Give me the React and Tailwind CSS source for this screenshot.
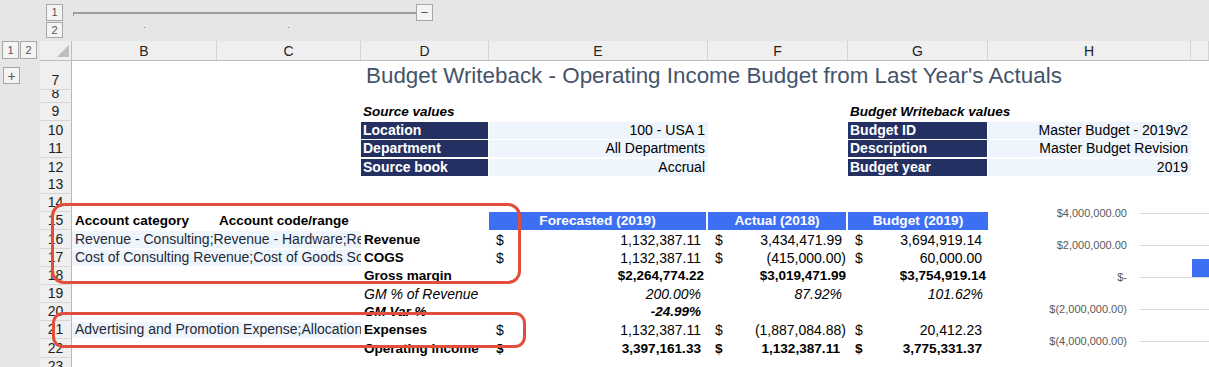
import React from "react";

const COLS =
  "grid grid-cols-[40px_32px_145px_144px_128px_219px_140px_140px_203px_18px]";

function Btn({ children, className = "" }) {
  return (
    <div
      className={`flex items-center justify-center border border-[#a6a6a6] bg-[#f4f4f4] text-[11px] leading-none text-[#555] ${className}`}
    >
      {children}
    </div>
  );
}

function Acct({ v, pr = "pr-[7px]", bold = false }) {
  return (
    <div
      className={`flex h-full items-end justify-between whitespace-nowrap pb-[1px] pl-[7px] ${pr} ${
        bold ? "font-bold text-[13.6px]" : ""
      }`}
    >
      <span>$</span>
      <span>{v}</span>
    </div>
  );
}

function Num({ v, pr = "pr-[7px]", cls = "" }) {
  return (
    <div
      className={`flex h-full items-end justify-end whitespace-nowrap pb-[1px] ${pr} ${cls}`}
    >
      {v}
    </div>
  );
}

function Txt({ children, cls = "", pl = "pl-[3px]" }) {
  return (
    <div
      className={`flex h-full items-end whitespace-nowrap pb-[1px] ${pl} ${cls}`}
    >
      {children}
    </div>
  );
}

function Navy({ children }) {
  return (
    <div className="flex h-full items-end whitespace-nowrap border-y border-r border-white bg-[#243062] pb-[1px] pl-[2px] font-bold text-white">
      {children}
    </div>
  );
}

function Light({ children }) {
  return (
    <div className="flex h-full items-end justify-end whitespace-nowrap border-y border-white bg-[#eef5fd] pb-[1px] pr-[3px]">
      {children}
    </div>
  );
}

function Head({ children, last = false }) {
  return (
    <div
      className={`flex h-full items-end justify-center whitespace-nowrap bg-[#3d6ff5] pb-[1px] text-[13.7px] font-bold text-white ${
        last ? "" : "border-r-2 border-white"
      }`}
    >
      {children}
    </div>
  );
}

function Fill({ children }) {
  return (
    <div className="col-span-2 flex h-full items-end overflow-hidden whitespace-nowrap border-y border-white bg-[#eef5fd] pb-[1px] pl-[3px] text-[#1f2937]">
      {children}
    </div>
  );
}

function Row({ n, h, cells, outline }) {
  return (
    <div className={`${COLS} ${h}`}>
      <div className="relative bg-[#e6e6e6]">{outline}</div>
      <div className="flex items-end justify-center overflow-hidden border-b border-r border-b-[#d6d6d6] border-r-[#b8b8b8] bg-[#efefef] pb-[1px] text-[14px] leading-[16px] text-[#222]">
        {n}
      </div>
      {cells}
    </div>
  );
}

const E = () => <div />;

export default function App() {
  const std = "h-[18.2px]";
  const B = "font-bold text-[13.5px]";
  return (
    <div className="relative h-[367px] w-[1209px] overflow-hidden bg-white font-['Liberation_Sans',Arial,sans-serif] text-[14px] leading-[16px] text-black">
      {/* outline bar */}
      <div className="relative flex h-[41px] items-start bg-[#e6e6e6] pl-[46px] pt-[4px]">
        <div className="flex flex-col gap-[1px]">
          <Btn className="h-[17px] w-[17px]">1</Btn>
          <Btn className="h-[16px] w-[17px]">2</Btn>
        </div>
        <div className="ml-[10px] flex h-[17px] items-center">
          <div className="relative h-[2px] w-[343px] bg-[#9c9c9c]">
            <div className="absolute left-0 top-0 h-[4px] w-[1px] bg-[#9c9c9c]" />
          </div>
          <Btn className="h-[17px] w-[17px] text-[13px]">−</Btn>
        </div>
        <div className="absolute left-[144px] top-[27px] h-[1px] w-[1px] bg-[#888]" />
        <div className="absolute left-[288px] top-[27px] h-[1px] w-[1px] bg-[#888]" />
      </div>

      {/* column header */}
      <div className={`${COLS} h-[20px]`}>
        <div className="flex items-start gap-[1px] bg-[#e6e6e6] pl-[2px]">
          <Btn className="h-[18px] w-[17px]">1</Btn>
          <Btn className="h-[18px] w-[17px]">2</Btn>
        </div>
        <div className="relative border-b border-r border-[#bdbdbd] bg-[#efefef]">
          <svg
            className="absolute right-[2px] bottom-[3px]"
            width="12"
            height="12"
            viewBox="0 0 12 12"
          >
            <polygon points="12,0 12,12 0,12" fill="#bdbdbd" />
          </svg>
        </div>
        {["B", "C", "D", "E", "F", "G", "H", ""].map((c, i) => (
          <div
            key={i}
            className="flex items-center justify-center border-b border-r border-b-[#bdbdbd] border-r-[#d4d4d4] bg-[#efefef] font-['Liberation_Sans_Narrow','Liberation_Sans',sans-serif] text-[14px] text-[#222]"
          >
            {c}
          </div>
        ))}
      </div>

      {/* row 7 */}
      <Row
        n="7"
        h="h-[29px]"
        outline={<Btn className="absolute left-[3px] top-[6px] h-[17px] w-[17px] text-[14px]">+</Btn>}
        cells={
          <>
            <E />
            <E />
            <div className="flex items-end whitespace-nowrap pb-[2px] pl-[5px] text-[22.4px] leading-[25px] text-[#44546a]">
              Budget Writeback - Operating Income Budget from Last Year's Actuals
            </div>
            <E />
            <E />
            <E />
            <E />
            <E />
          </>
        }
      />
      <Row n="8" h="h-[13px]" cells={<></>} />
      <Row
        n="9"
        h={std}
        cells={
          <>
            <E />
            <E />
            <Txt pl="pl-[2px]" cls={`${B} italic`}>Source values</Txt>
            <E />
            <E />
            <Txt pl="pl-[2px]" cls={`${B} italic`}>Budget Writeback values</Txt>
            <E />
            <E />
          </>
        }
      />
      {[
        ["10", "Location", "100 - USA 1", "Budget ID", "Master Budget - 2019v2"],
        ["11", "Department", "All Departments", "Description", "Master Budget Revision"],
        ["12", "Source book", "Accrual", "Budget year", "2019"],
      ].map((r) => (
        <Row
          key={r[0]}
          n={r[0]}
          h={std}
          cells={
            <>
              <E />
              <E />
              <Navy>{r[1]}</Navy>
              <Light>{r[2]}</Light>
              <E />
              <Navy>{r[3]}</Navy>
              <Light>{r[4]}</Light>
              <E />
            </>
          }
        />
      ))}
      <Row n="13" h={std} cells={<></>} />
      <Row n="14" h={std} cells={<></>} />
      <Row
        n="15"
        h={std}
        cells={
          <>
            <Txt cls={B}>Account category</Txt>
            <Txt pl="pl-[2px]" cls={B}>Account code/range</Txt>
            <E />
            <Head>Forecasted (2019)</Head>
            <Head>Actual (2018)</Head>
            <Head last>Budget (2019)</Head>
            <E />
            <E />
          </>
        }
      />
      <Row
        n="16"
        h={std}
        cells={
          <>
            <Fill>Revenue - Consulting;Revenue - Hardware;Rev</Fill>
            <Txt cls={B}>Revenue</Txt>
            <Acct v="1,132,387.11" />
            <Acct v="3,434,471.99" pr="pr-[6px]" />
            <Acct v="3,694,919.14" pr="pr-[6px]" />
            <E />
            <E />
          </>
        }
      />
      <Row
        n="17"
        h={std}
        cells={
          <>
            <Fill>Cost of Consulting Revenue;Cost of Goods Sol</Fill>
            <Txt cls={B}>COGS</Txt>
            <Acct v="1,132,387.11" />
            <Acct v="(415,000.00)" pr="pr-[2px]" />
            <Acct v="60,000.00" pr="pr-[6px]" />
            <E />
            <E />
          </>
        }
      />
      <Row
        n="18"
        h={std}
        cells={
          <>
            <E />
            <E />
            <Txt cls={B}>Gross margin</Txt>
            <Num v="$2,264,774.22" pr="pr-[4px]" cls={B} />
            <Num v="$3,019,471.99" pr="pr-[2px]" cls={B} />
            <Num v="$3,754,919.14" pr="pr-[2px]" cls={B} />
            <E />
            <E />
          </>
        }
      />
      <Row
        n="19"
        h={std}
        cells={
          <>
            <E />
            <E />
            <Txt cls="italic">GM % of Revenue</Txt>
            <Num v="200.00%" cls="italic" />
            <Num v="87.92%" pr="pr-[6px]" cls="italic" />
            <Num v="101.62%" pr="pr-[5px]" cls="italic" />
            <E />
            <E />
          </>
        }
      />
      <Row
        n="20"
        h={std}
        cells={
          <>
            <E />
            <E />
            <Txt cls={`${B} italic`}>GM Var %</Txt>
            <Num v="-24.99%" cls={`${B} italic`} />
            <E />
            <E />
            <E />
            <E />
          </>
        }
      />
      <Row
        n="21"
        h={std}
        cells={
          <>
            <Fill>Advertising and Promotion Expense;Allocation</Fill>
            <Txt cls={B}>Expenses</Txt>
            <Acct v="1,132,387.11" />
            <Acct v="(1,887,084.88)" pr="pr-[2px]" />
            <Acct v="20,412.23" pr="pr-[6px]" />
            <E />
            <E />
          </>
        }
      />
      <Row
        n="22"
        h={std}
        cells={
          <>
            <E />
            <E />
            <Txt cls={B}>Operating income</Txt>
            <Acct v="3,397,161.33" bold />
            <Acct v="1,132,387.11" pr="pr-[8px]" bold />
            <Acct v="3,775,331.37" pr="pr-[6px]" bold />
            <E />
            <E />
          </>
        }
      />
      <Row n="23" h={std} cells={<></>} />

      {/* floating chart */}
      <div className="absolute left-[1040px] top-[197px] w-[169px]">
        {[
          "$4,000,000.00",
          "$2,000,000.00",
          "$-",
          "$(2,000,000.00)",
          "$(4,000,000.00)",
        ].map((l) => (
          <div key={l} className="flex h-[32px] items-center">
            <div className="w-[87px] whitespace-nowrap text-right text-[11px] leading-[12px] text-[#595959]">
              {l}
            </div>
            <div className="ml-[13px] h-[1px] flex-1 bg-[#d9d9d9]" />
          </div>
        ))}
        <div className="absolute left-[152px] top-[62px] h-[18px] w-[20px] bg-[#3d6ff5]" />
      </div>

      {/* highlight boxes */}
      <div className="absolute left-[51px] top-[203px] h-[81px] w-[470px] rounded-[13px] border-[3px] border-[#e34d3b]" />
      <div className="absolute left-[52px] top-[312px] h-[36px] w-[474px] rounded-[11px] border-[3px] border-[#e34d3b]" />
    </div>
  );
}
